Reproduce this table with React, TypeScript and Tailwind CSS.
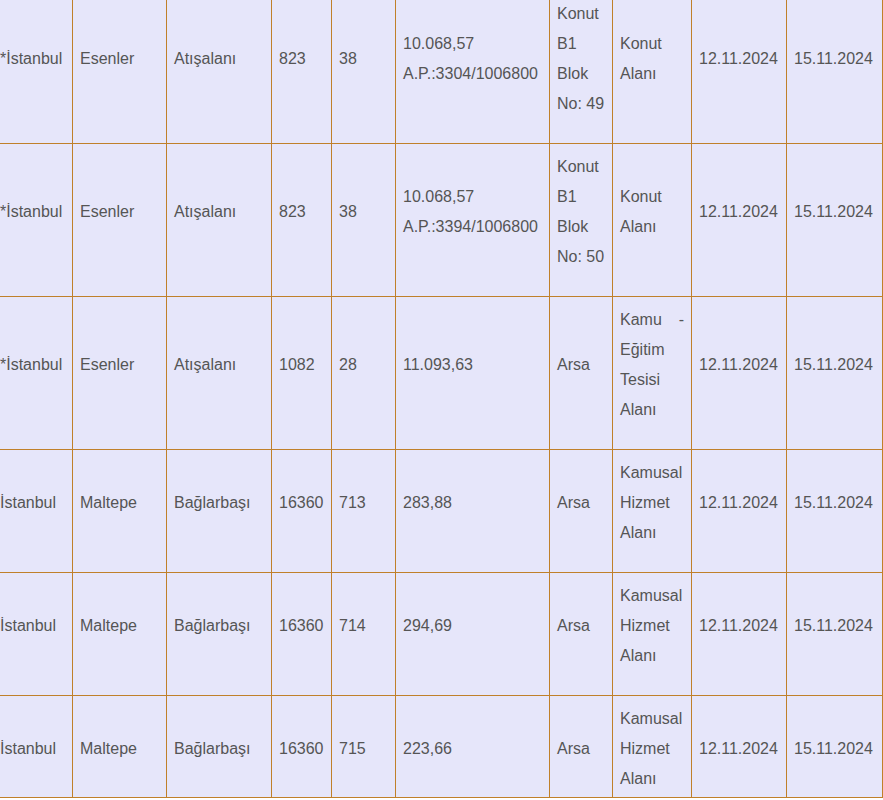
const rows = [
  ["*İstanbul", "Esenler", "Atışalanı", "823", "38", "10.068,57 A.P.:3304/1006800", "Konut B1 Blok No: 49", "Konut Alanı", "12.11.2024", "15.11.2024"],
  ["*İstanbul", "Esenler", "Atışalanı", "823", "38", "10.068,57 A.P.:3394/1006800", "Konut B1 Blok No: 50", "Konut Alanı", "12.11.2024", "15.11.2024"],
  ["*İstanbul", "Esenler", "Atışalanı", "1082", "28", "11.093,63", "Arsa", "Kamu - Eğitim Tesisi Alanı", "12.11.2024", "15.11.2024"],
  ["İstanbul", "Maltepe", "Bağlarbaşı", "16360", "713", "283,88", "Arsa", "Kamusal Hizmet Alanı", "12.11.2024", "15.11.2024"],
  ["İstanbul", "Maltepe", "Bağlarbaşı", "16360", "714", "294,69", "Arsa", "Kamusal Hizmet Alanı", "12.11.2024", "15.11.2024"],
  ["İstanbul", "Maltepe", "Bağlarbaşı", "16360", "715", "223,66", "Arsa", "Kamusal Hizmet Alanı", "12.11.2024", "15.11.2024"],
];

// first column carries the left border too
const widths = ["w-[81px]", "w-[94px]", "w-[105px]", "w-[60px]", "w-[64px]", "w-[154px]", "w-[63px]", "w-[79px]", "w-[95px]", "w-[96px]"];

export default function App() {
  return (
    <div className="h-[800px] w-[883px] overflow-hidden bg-white font-['Liberation_Sans',Arial,sans-serif]">
      <table className="-ml-[8px] -mt-[10px] w-[891px] table-fixed border-separate border-spacing-0 bg-[#e6e6fa] text-base leading-[30px] text-[#555]">
        <colgroup>
          {widths.map((w, i) => (
            <col key={i} className={w} />
          ))}
        </colgroup>
        <tbody>
          {rows.map((row, r) => {
            const last = r === rows.length - 1;
            return (
              <tr key={r}>
                {row.map((cell, c) => (
                  <td
                    key={c}
                    className={`border-b border-r border-[#c0802a] px-[7px] pt-[8px] text-justify align-middle ${
                      c === 0 ? "border-l" : ""
                    } ${r === 0 ? "border-t" : ""} ${last ? "pb-[3px]" : "pb-[24px]"}`}
                  >
                    {cell}
                  </td>
                ))}
              </tr>
            );
          })}
        </tbody>
      </table>
    </div>
  );
}
